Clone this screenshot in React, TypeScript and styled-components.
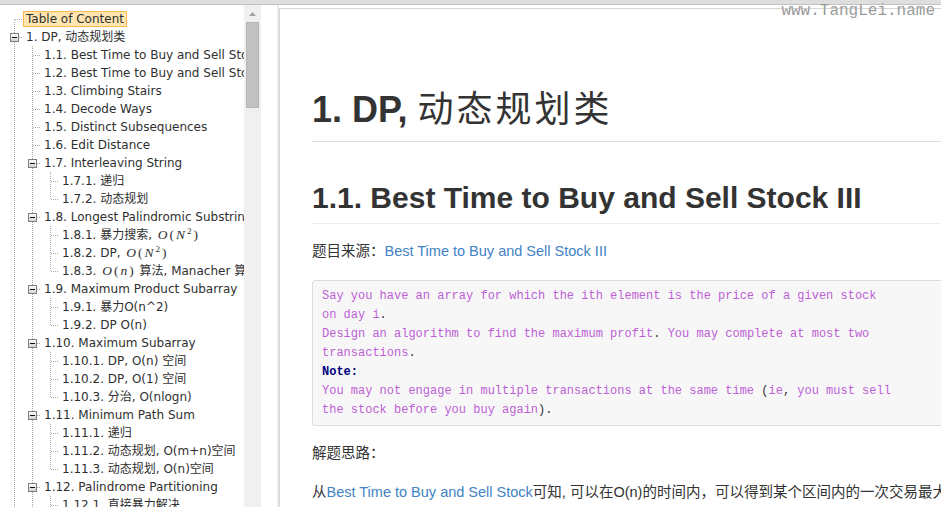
import React from "react";
import styled, { createGlobalStyle } from "styled-components";

const GlobalStyle = createGlobalStyle`
  html, body { margin: 0; padding: 0; background: #fff; }
  body { font-family: "DejaVu Sans", "Noto Sans CJK SC", sans-serif; }
`;

const Page = styled.div`
  position: relative;
  width: 941px;
  height: 507px;
  overflow: hidden;
  display: flex;
  flex-direction: column;
  background: #fff;
`;

const TopBar = styled.div`
  flex: none;
  height: 4px;
  background: #dedede;
  border-bottom: 1px solid #c2c2c2;
`;

const Body = styled.div`
  flex: 1;
  min-height: 0;
  display: flex;
`;

const Sidebar = styled.aside`
  flex: none;
  display: flex;
  width: 261px;
`;

const TreeViewport = styled.div`
  width: 244px;
  flex: none;
  overflow: hidden;
  box-sizing: border-box;
  padding: 5px 0 0 5px;
  font: 12px "DejaVu Sans", "Noto Sans CJK SC", sans-serif;
  color: #2f2f2f;
`;

const Row = styled.div`
  display: flex;
  align-items: center;
  height: 18px;
  white-space: nowrap;
`;

const ConnSvg = styled.svg`
  flex: none;
  width: 18px;
  height: 18px;
  display: block;
`;

const Label = styled.span<{ $selected?: boolean }>`
  display: inline-block;
  box-sizing: border-box;
  height: 16px;
  line-height: 14px;
  padding: 0 2px;
  border: 1px solid ${(p) => (p.$selected ? "#ffb951" : "transparent")};
  background: ${(p) => (p.$selected ? "#ffe6b0" : "transparent")};
`;

const MathExpr = styled.span`
  font-family: "Liberation Serif", "DejaVu Serif", serif;
  font-size: 13.5px;
  letter-spacing: 2px;
  margin-left: 2px;
`;

const MathVar = styled.i`
  font-style: italic;
`;

const MathSup = styled.sup`
  font-size: 9px;
  line-height: 0;
  vertical-align: 5px;
`;

const ScrollTrack = styled.div`
  width: 17px;
  flex: none;
  background: #f0f0f0;
  display: flex;
  flex-direction: column;
  align-items: center;
`;

const ScrollArrow = styled.div`
  height: 17px;
  width: 17px;
  display: flex;
  align-items: center;
  justify-content: center;
`;

const ScrollThumb = styled.div`
  width: 13px;
  height: 86px;
  box-sizing: border-box;
  background: #c1c1c1;
  border: 1px solid #b4b4b4;
`;

const Main = styled.main`
  flex: none;
  margin-left: 16px;
  border-left: 2px solid #ececec;
  padding-top: 3px;
  display: flex;
`;

const Panel = styled.article`
  width: 700px;
  box-sizing: border-box;
  border-top: 1px solid #d6d6d6;
  border-left: 1px solid #d4d4d4;
  padding: 0 0 0 32px;
  font-family: "Liberation Sans", "Noto Sans CJK SC", sans-serif;
  color: #333;
`;

const H1 = styled.h1`
  margin: 79px 0 0;
  font-size: 36px;
  line-height: 43px;
  font-weight: bold;
  padding-bottom: 10px;
  border-bottom: 1px solid #dddddd;
`;

const CjkThin = styled.span`
  font-weight: 400;
  letter-spacing: 3px;
`;

const H2 = styled.h2`
  margin: 38px 0 0;
  font-size: 30px;
  line-height: 36px;
  font-weight: bold;
  padding-bottom: 7px;
  border-bottom: 1px solid #eeeeee;
`;

const Para = styled.p<{ $gap?: number }>`
  margin: ${(p) => p.$gap ?? 16}px 0 0;
  font-size: 14.5px;
  line-height: 23px;
  white-space: nowrap;
`;

const Link = styled.a`
  color: #4183c4;
  text-decoration: none;
`;

const CodeBlock = styled.pre`
  margin: 17px 0 0;
  padding: 6px 10px 5px 9px;
  background: #f7f7f7;
  border: 1px solid #dcdcdc;
  border-radius: 3px;
  font: 12px/19px "Liberation Mono", "DejaVu Sans Mono", monospace;
  color: #bd5fd6;
  white-space: pre;
`;

const CodePunct = styled.span`
  color: #333;
`;

const CodeKeyword = styled.span`
  color: #000080;
  font-weight: bold;
`;

const Watermark = styled.div`
  position: absolute;
  top: 2px;
  right: 6px;
  font: 16px/18px "Liberation Mono", "DejaVu Sans Mono", monospace;
  color: #9a9a9a;
  text-shadow: 0 0 1px #ffffff;
`;

type Kind = "first" | "mid" | "last" | "switch";

interface TreeNode {
  guides: boolean[];
  kind: Kind;
  label: React.ReactNode;
  selected?: boolean;
}

const LINE = "#a8a8a8";

const Guide = ({ on }: { on: boolean }) => (
  <ConnSvg viewBox="0 0 18 18" shapeRendering="crispEdges">
    {on && <line x1="9.5" y1="0" x2="9.5" y2="18" stroke={LINE} strokeDasharray="1 1" />}
  </ConnSvg>
);

const Connector = ({ kind }: { kind: Kind }) => {
  if (kind === "switch") {
    return (
      <ConnSvg viewBox="0 0 18 18" shapeRendering="crispEdges">
        <defs>
          <linearGradient id="swg" x1="0" y1="0" x2="0" y2="1">
            <stop offset="0" stopColor="#ffffff" />
            <stop offset="1" stopColor="#cfcfcf" />
          </linearGradient>
        </defs>
        <line x1="9.5" y1="0" x2="9.5" y2="5" stroke={LINE} strokeDasharray="1 1" />
        <line x1="9.5" y1="14" x2="9.5" y2="18" stroke={LINE} strokeDasharray="1 1" />
        <line x1="14" y1="9.5" x2="18" y2="9.5" stroke={LINE} strokeDasharray="1 1" />
        <rect x="5.5" y="5.5" width="8" height="8" fill="url(#swg)" stroke="#7f7f7f" />
        <line x1="7" y1="9.5" x2="12" y2="9.5" stroke="#111" />
      </ConnSvg>
    );
  }
  const top = kind !== "first";
  const bottom = kind !== "last";
  return (
    <ConnSvg viewBox="0 0 18 18" shapeRendering="crispEdges">
      {top && <line x1="9.5" y1="0" x2="9.5" y2="10" stroke={LINE} strokeDasharray="1 1" />}
      {bottom && <line x1="9.5" y1="10" x2="9.5" y2="18" stroke={LINE} strokeDasharray="1 1" />}
      <line x1="10" y1="9.5" x2="18" y2="9.5" stroke={LINE} strokeDasharray="1 1" />
    </ConnSvg>
  );
};

const On2 = (
  <MathExpr>
    <MathVar>O</MathVar>(<MathVar>N</MathVar>
    <MathSup>2</MathSup>)
  </MathExpr>
);

const L1 = [true];
const L2 = [true, true];

const nodes: TreeNode[] = [
  { guides: [], kind: "first", label: "Table of Content", selected: true },
  { guides: [], kind: "switch", label: "1. DP, 动态规划类" },
  { guides: L1, kind: "mid", label: "1.1. Best Time to Buy and Sell Stock III" },
  { guides: L1, kind: "mid", label: "1.2. Best Time to Buy and Sell Stock IV" },
  { guides: L1, kind: "mid", label: "1.3. Climbing Stairs" },
  { guides: L1, kind: "mid", label: "1.4. Decode Ways" },
  { guides: L1, kind: "mid", label: "1.5. Distinct Subsequences" },
  { guides: L1, kind: "mid", label: "1.6. Edit Distance" },
  { guides: L1, kind: "switch", label: "1.7. Interleaving String" },
  { guides: L2, kind: "mid", label: "1.7.1. 递归" },
  { guides: L2, kind: "last", label: "1.7.2. 动态规划" },
  { guides: L1, kind: "switch", label: "1.8. Longest Palindromic Substring" },
  { guides: L2, kind: "mid", label: <>1.8.1. 暴力搜索, {On2}</> },
  { guides: L2, kind: "mid", label: <>1.8.2. DP, {On2}</> },
  {
    guides: L2,
    kind: "last",
    label: (
      <>
        1.8.3.{" "}
        <MathExpr>
          <MathVar>O</MathVar>(<MathVar>n</MathVar>)
        </MathExpr>{" "}
        算法, Manacher 算法
      </>
    ),
  },
  { guides: L1, kind: "switch", label: "1.9. Maximum Product Subarray" },
  { guides: L2, kind: "mid", label: "1.9.1. 暴力O(n^2)" },
  { guides: L2, kind: "last", label: "1.9.2. DP O(n)" },
  { guides: L1, kind: "switch", label: "1.10. Maximum Subarray" },
  { guides: L2, kind: "mid", label: "1.10.1. DP, O(n) 空间" },
  { guides: L2, kind: "mid", label: "1.10.2. DP, O(1) 空间" },
  { guides: L2, kind: "last", label: "1.10.3. 分治, O(nlogn)" },
  { guides: L1, kind: "switch", label: "1.11. Minimum Path Sum" },
  { guides: L2, kind: "mid", label: "1.11.1. 递归" },
  { guides: L2, kind: "mid", label: "1.11.2. 动态规划, O(m+n)空间" },
  { guides: L2, kind: "last", label: "1.11.3. 动态规划, O(n)空间" },
  { guides: L1, kind: "switch", label: "1.12. Palindrome Partitioning" },
  { guides: L2, kind: "mid", label: "1.12.1. 直接暴力解决" },
  { guides: L2, kind: "last", label: "1.12.2. 动态规划" },
];

const codeLines: string[] = [
  "Say you have an array for which the ith element is the price of a given stock",
  "on day i.",
  "Design an algorithm to find the maximum profit. You may complete at most two",
  "transactions.",
  "@Note:",
  "You may not engage in multiple transactions at the same time (ie, you must sell",
  "the stock before you buy again).",
];

const CodeLine = ({ text }: { text: string }) => {
  if (text.startsWith("@")) return <CodeKeyword>{text.slice(1)}</CodeKeyword>;
  const parts = text.split(/([.,()])/);
  return (
    <>
      {parts.map((p, i) =>
        /^[.,()]$/.test(p) ? <CodePunct key={i}>{p}</CodePunct> : <React.Fragment key={i}>{p}</React.Fragment>
      )}
    </>
  );
};

export default function App() {
  return (
    <>
      <GlobalStyle />
      <Page>
        <TopBar />
        <Body>
          <Sidebar>
            <TreeViewport>
              {nodes.map((n, i) => (
                <Row key={i}>
                  {n.guides.map((g, j) => (
                    <Guide key={j} on={g} />
                  ))}
                  <Connector kind={n.kind} />
                  <Label $selected={n.selected}>{n.label}</Label>
                </Row>
              ))}
            </TreeViewport>
            <ScrollTrack>
              <ScrollArrow>
                <svg width="7" height="4" viewBox="0 0 7 4">
                  <path d="M0 4 L3.5 0 L7 4 Z" fill="#a3a3a3" />
                </svg>
              </ScrollArrow>
              <ScrollThumb />
            </ScrollTrack>
          </Sidebar>
          <Main>
            <Panel>
              <H1>
                1. DP, <CjkThin>动态规划类</CjkThin>
              </H1>
              <H2>1.1. Best Time to Buy and Sell Stock III</H2>
              <Para>
                题目来源：<Link href="#">Best Time to Buy and Sell Stock III</Link>
              </Para>
              <CodeBlock>
                {codeLines.map((l, i) => (
                  <React.Fragment key={i}>
                    <CodeLine text={l} />
                    {i < codeLines.length - 1 ? "\n" : null}
                  </React.Fragment>
                ))}
              </CodeBlock>
              <Para>解题思路：</Para>
              <Para>
                从<Link href="#">Best Time to Buy and Sell Stock</Link>可知, 可以在O(n)的时间内，可以得到某个区间内的一次交易最大利润。
              </Para>
            </Panel>
          </Main>
        </Body>
        <Watermark>www.TangLei.name</Watermark>
      </Page>
    </>
  );
}
